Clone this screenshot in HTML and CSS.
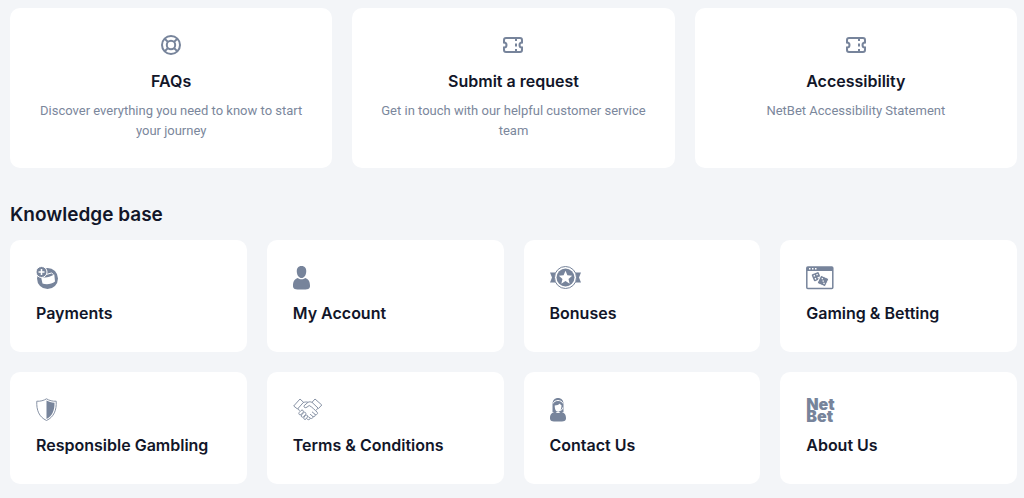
FILE: index.html
```html
<!DOCTYPE html>
<html lang="en">
<head>
<meta charset="utf-8">
<title>Help Centre</title>
<link rel="stylesheet" href="styles.css">
</head>
<body>
<main class="page">
  <nav class="quick" aria-label="Quick links">
    <a class="card quick-card" href="#faqs">
      <svg class="quick-icon" viewBox="0 0 24 24" aria-hidden="true"><g class="line"><circle cx="12" cy="12" r="9"/><circle cx="12" cy="12" r="4.2"/><path d="M5.600 5.600 9 9M18.400 5.600 15 9M5.600 18.400 9 15M18.400 18.400 15 15"/></g></svg>
      <h3 class="title">FAQs</h3>
      <p class="text">Discover everything you need to know to start your journey</p>
    </a>
    <a class="card quick-card" href="#request">
      <svg class="quick-icon" viewBox="0 0 24 24" aria-hidden="true"><g class="line"><path d="M5 5h14a2 2 0 0 1 2 2V9.500a2.500 2.500 0 0 0 0 5V17a2 2 0 0 1-2 2H5a2 2 0 0 1-2-2V14.500a2.500 2.500 0 0 0 0-5V7a2 2 0 0 1 2-2z"/><path d="M15 5v3M15 10.500v3M15 16v3"/></g></svg>
      <h3 class="title">Submit a request</h3>
      <p class="text">Get in touch with our helpful customer service team</p>
    </a>
    <a class="card quick-card" href="#accessibility">
      <svg class="quick-icon" viewBox="0 0 24 24" aria-hidden="true"><g class="line"><path d="M5 5h14a2 2 0 0 1 2 2V9.500a2.500 2.500 0 0 0 0 5V17a2 2 0 0 1-2 2H5a2 2 0 0 1-2-2V14.500a2.500 2.500 0 0 0 0-5V7a2 2 0 0 1 2-2z"/><path d="M15 5v3M15 10.500v3M15 16v3"/></g></svg>
      <h3 class="title">Accessibility</h3>
      <p class="text">NetBet Accessibility Statement</p>
    </a>
  </nav>

  <h2 class="heading">Knowledge base</h2>
  <nav class="topics" aria-label="Knowledge base">
    <a class="card topic" href="#payments">
      <svg class="icon" viewBox="0 0 32 24" aria-hidden="true"><circle class="fill" cx="11.500" cy="12.500" r="10.500"/><path class="paper" d="M5 10.800C9 12 13 11.500 18.300 8.500L19 15.500C15.500 18.500 10 18.800 6.500 17.500z"/><path class="fold" d="M10 8.500 15.500 7 17.500 8.500"/><circle class="badge" cx="5.500" cy="6" r="5.500"/><path class="plus" d="M5.500 3v6M2.500 6h6"/></svg>
      <h3 class="title">Payments</h3>
    </a>
    <a class="card topic" href="#account">
      <svg class="icon" viewBox="0 0 32 24" aria-hidden="true"><path class="fill" d="M8.500 0C12 0 13.500 2.500 13.200 6c-.3 3.500-2.200 6-4.700 6S4.100 9.500 3.800 6C3.500 2.500 5 0 8.500 0z"/><path class="fill" d="M0 20c0-5 1.800-7 4.700-8 2.200 1.800 5.400 1.800 7.600 0 2.900 1 4.700 3 4.700 8 0 3-2 3.500-8.500 3.500S0 23 0 20z"/></svg>
      <h3 class="title">My Account</h3>
    </a>
    <a class="card topic" href="#bonuses">
      <svg class="icon" viewBox="0 0 32 24" aria-hidden="true"><path class="fill" d="M0 6.500h7v10H0l2-5zM31 6.500h-7v10h7l-2-5z"/><circle class="ring" cx="15.500" cy="11.500" r="11"/><circle class="fill" cx="15.500" cy="11.500" r="9"/><path class="white" d="m15.500 4.800 1.900 4.500 4.800.4-3.700 3.200 1.200 4.800-4.200-2.600-4.200 2.600 1.200-4.800-3.700-3.200 4.800-.4z"/></svg>
      <h3 class="title">Bonuses</h3>
    </a>
    <a class="card topic" href="#gaming">
      <svg class="icon" viewBox="0 0 32 24" aria-hidden="true"><rect class="frame" x=".8" y="1" width="26" height="21.500" rx="1"/><path class="fill" d="M1 1h26v4H1z"/><path class="white" d="M3 2h1.500v1.500H3zM6 2h1.500v1.500H6zM9 2h1.500v1.500H9z"/><g transform="rotate(-22 10 10.500)"><rect class="fill" x="6.500" y="7" width="7.500" height="7.500" rx="1"/><path class="white" d="M8 8.500h1.400v1.400H8zM11 8.500h1.400v1.400H11zM8 11.700h1.400v1.400H8zM11 11.700h1.400v1.400H11z"/></g><g transform="rotate(25 17 15)"><rect class="badge" x="12.500" y="10.500" width="9" height="9" rx="1"/><path class="white" d="M14.700 12.500h1.300v1.300h-1.300zM16.500 14.300h1.300v1.300h-1.300zM18.300 16.100h1.300v1.300h-1.300z"/></g></svg>
      <h3 class="title">Gaming &amp; Betting</h3>
    </a>
    <a class="card topic" href="#responsible">
      <svg class="icon" viewBox="0 0 32 24" aria-hidden="true"><path class="thin" d="M10.500.8C8 2.500 4 3.500.8 3.200.3 12 3 19 10.500 22.500 18 19 20.700 12 20.200 3.200 17 3.500 13 2.500 10.500.8z"/><path class="fill" d="M10.500 2.500c2 1.200 5 2.200 8 2.200C18.700 12 16.500 18 10.500 21z"/></svg>
      <h3 class="title">Responsible Gambling</h3>
    </a>
    <a class="card topic" href="#terms">
      <svg class="icon" viewBox="0 0 32 24" aria-hidden="true"><g class="thin"><path d="M.7 8 7 1 10.500 4.300 4.500 11zM22 1 28.800 7 25.500 10.500 19 4.300z"/><path d="M10 4.500c2-.5 3.500-.8 5-.2l-4 3.500c-.5 1.800 1.500 2.500 3 1.300l2.200-1.600c3 1.500 5.500 4.500 7.800 6.500 1.500 1.800-.6 3.400-2 2.300l-3-2.500M15 4.300c1.500-.8 2.800-.5 4.300.2M24.800 10.200 23 12.500M5 10.500l1.500 2.300M22 16.300c1 1.700-.8 3-2.300 2l-2.600-2.100M19.700 18.300c.8 1.700-1 2.800-2.400 1.900l-2-1.500M17.300 20.200c-.5 2-2.500 1.800-3.500.5"/><path d="M6.200 14.500 8 12.500c1.300-1.300 3.200.3 2.200 1.700l-2 2.200c-1.300 1.300-3.200-.4-2-1.900zM8.500 17l2-2.300c1.200-1.300 3.200.2 2.100 1.700l-2 2.400c-1.200 1.200-3.200-.3-2.100-1.800zM11 19.200l1.400-1.700c1.200-1.200 3 .2 2 1.600L13 21c-1.200 1.300-3-.3-2-1.800z"/></g></svg>
      <h3 class="title">Terms &amp; Conditions</h3>
    </a>
    <a class="card topic" href="#contact">
      <svg class="icon" viewBox="0 0 32 24" aria-hidden="true"><path class="fill" d="M2.500 14V6C2.500 2 5 0 8 0s5.500 2 5.500 6v8z"/><path class="white" d="M4.700 7.500c2 0 4.200-.7 5.300-2 .3 1 .9 1.500 1.500 1.700C11.500 11 10.200 13.700 8 13.700S4.700 11 4.700 7.500z"/><path class="band" d="M3 5.500C4.500 1.500 11.500 1.500 13 5.500M12.700 9.500c0 2-1.500 3-3.200 3"/><path class="fill" d="M0 20c0-4 2-5.500 5.300-6.300 1.500 1.700 3.900 1.700 5.400 0C14 14.500 16 16 16 20c0 3-1.500 3.500-8 3.500S0 23 0 20z"/></svg>
      <h3 class="title">Contact Us</h3>
    </a>
    <a class="card topic" href="#about">
      <span class="icon logo">Net<br>Bet</span>
      <h3 class="title">About Us</h3>
    </a>
  </nav>
</main>
</body>
</html>
```
FILE: styles.css
```css
* { box-sizing: border-box; }

body {
  margin: 0;
  background: #f3f5f8;
  color: #121629;
  font-family: Inter, "Noto Sans", sans-serif;
}

.page { padding: 8px 7px 14px 10px; }

.quick,
.topics { display: grid; gap: 20px; }

.quick { grid-template-columns: repeat(3, minmax(0, 1fr)); }
.topics { grid-template-columns: repeat(4, minmax(0, 1fr)); }

.card {
  display: flex;
  flex-direction: column;
  background: #fff;
  border-radius: 10px;
  color: inherit;
  text-decoration: none;
}

.quick-card {
  align-items: center;
  padding: 25px 24px 27px;
  text-align: center;
}

.topic {
  align-items: flex-start;
  padding: 26px 26px 27px;
}

.title {
  margin: 0;
  font-size: 16px;
  line-height: 24px;
  font-weight: 600;
}

.quick-card .title { margin-top: 12px; }
.topic .title { margin-top: 11px; }

.text {
  margin: 8px 0 0;
  color: #7b879c;
  font-family: Roboto, "Noto Sans", sans-serif;
  font-size: 13px;
  line-height: 20px;
}

.heading {
  margin: 33px 0 11px;
  font-size: 19px;
  line-height: 28px;
  font-weight: 600;
}

.quick-icon { width: 24px; height: 24px; }

.icon {
  display: block;
  width: 32px;
  height: 24px;
}

.fill { fill: #77849b; }
.white,
.paper { fill: #fff; }
.badge { fill: #77849b; stroke: #fff; stroke-width: 1; }
.line { fill: none; stroke: #77849b; stroke-width: 2; }
.ring { fill: #fff; stroke: #77849b; stroke-width: 1; }
.frame { fill: #fff; stroke: #77849b; stroke-width: 1.5; }
.thin { fill: none; stroke: #8792a5; stroke-width: 1; stroke-linejoin: round; }
.fold { fill: none; stroke: #fff; stroke-width: 1; }
.plus { fill: none; stroke: #fff; stroke-width: 1.5; }
.band { fill: none; stroke: #fff; stroke-width: 1; }

.logo {
  color: #77849b;
  font-size: 16px;
  line-height: 12px;
  font-weight: 900;
}
```
